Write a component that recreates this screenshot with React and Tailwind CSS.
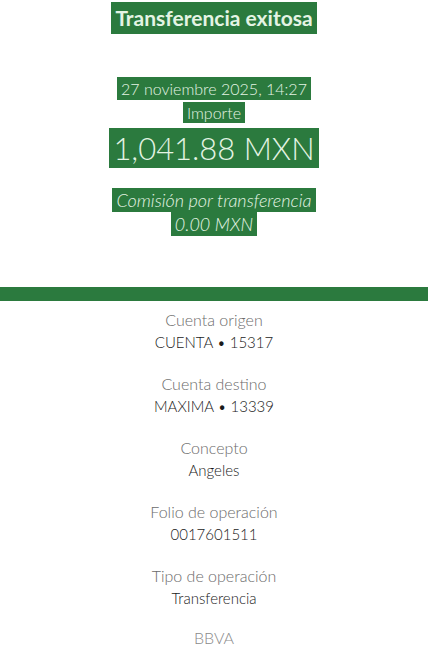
import React from 'react';

const rows = [
  { label: 'Cuenta origen', value: 'CUENTA • 15317' },
  { label: 'Cuenta destino', value: 'MAXIMA • 13339' },
  { label: 'Concepto', value: 'Angeles' },
  { label: 'Folio de operación', value: '0017601511' },
  { label: 'Tipo de operación', value: 'Transferencia' },
];

const Mark = ({ children, className = '' }) => (
  <span className={`bg-[#2b7a3e] text-[#e4f4e4] px-[4px] py-[1px] ${className}`}>{children}</span>
);

export default function App() {
  return (
    <div className="w-[428px] h-[661px] bg-white overflow-hidden text-center" style={{ fontFamily: 'Lato, "Open Sans", sans-serif' }}>
      <div className="pt-[2px]">
        <Mark className="inline-block text-[21px] font-bold leading-[30px]">Transferencia exitosa</Mark>
      </div>
      <div className="mt-[44px] text-[16px] leading-[22px] font-light">
        <Mark className="py-[2px]">27 noviembre 2025, 14:27</Mark>
      </div>
      <div className="mt-[2px] text-[16px] leading-[22px] font-light">
        <Mark>Importe</Mark>
      </div>
      <div className="mt-[3px] text-[31px] leading-[42px] font-light">
        <Mark>1,041.88 MXN</Mark>
      </div>
      <div className="mt-[20px] text-[18px] leading-[22px] font-light italic">
        <Mark>Comisión por transferencia</Mark>
      </div>
      <div className="mt-[2px] text-[18px] leading-[22px] font-light italic">
        <Mark>0.00 MXN</Mark>
      </div>
      <div className="mt-[52px] h-[14px] bg-[#2b7a3e]" />
      <div className="mt-[8px] flex flex-col gap-[20px]">
        {rows.map((r) => (
          <div key={r.label} className="flex flex-col">
            <span className="text-[16px] leading-[22px] font-light text-[#6b6b6b]">{r.label}</span>
            <span className="text-[15px] leading-[22px] font-light text-[#1a1a1a]">{r.value}</span>
          </div>
        ))}
        <span className="text-[16px] leading-[22px] font-light text-[#8a8a8a] mt-[-2px]">BBVA</span>
      </div>
    </div>
  );
}
